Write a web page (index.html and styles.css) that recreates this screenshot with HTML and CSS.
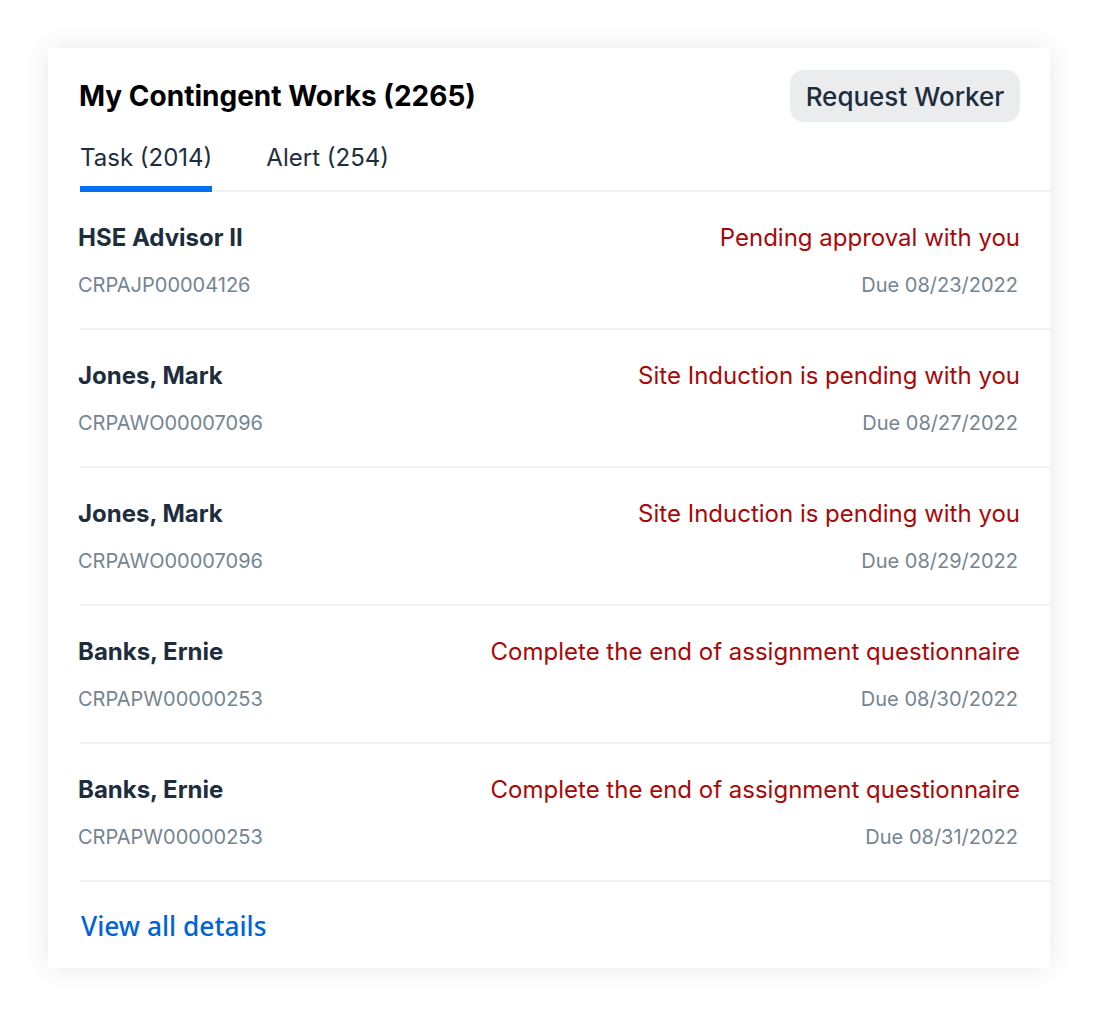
FILE: index.html
```html
<!DOCTYPE html>
<html lang="en">
<head>
<meta charset="utf-8">
<title>My Contingent Works</title>
<link rel="stylesheet" href="styles.css">
</head>
<body>
<div class="card">
  <div class="header">
    <h1 class="title">My Contingent Works (2265)</h1>
    <button class="btn">Request Worker</button>
  </div>
  <div class="tabs">
    <div class="tab active">Task (2014)</div>
    <div class="tab">Alert (254)</div>
  </div>
  <ul class="list">
    <li class="row">
      <div class="line"><span class="name">HSE Advisor II</span><span class="status">Pending approval with you</span></div>
      <div class="line"><span class="id">CRPAJP00004126</span><span class="due">Due 08/23/2022</span></div>
    </li>
    <li class="row">
      <div class="line"><span class="name">Jones, Mark</span><span class="status">Site Induction is pending with you</span></div>
      <div class="line"><span class="id">CRPAWO00007096</span><span class="due">Due 08/27/2022</span></div>
    </li>
    <li class="row">
      <div class="line"><span class="name">Jones, Mark</span><span class="status">Site Induction is pending with you</span></div>
      <div class="line"><span class="id">CRPAWO00007096</span><span class="due">Due 08/29/2022</span></div>
    </li>
    <li class="row">
      <div class="line"><span class="name">Banks, Ernie</span><span class="status">Complete the end of assignment questionnaire</span></div>
      <div class="line"><span class="id">CRPAPW00000253</span><span class="due">Due 08/30/2022</span></div>
    </li>
    <li class="row">
      <div class="line"><span class="name">Banks, Ernie</span><span class="status">Complete the end of assignment questionnaire</span></div>
      <div class="line"><span class="id">CRPAPW00000253</span><span class="due">Due 08/31/2022</span></div>
    </li>
  </ul>
  <div class="footer">
    <a class="link" href="#">View all details</a>
  </div>
</div>
</body>
</html>
```

FILE: styles.css
```css
* { box-sizing: border-box; }
html, body { margin: 0; padding: 0; background: #ffffff; }
body {
  padding: 48px;
  font-family: Inter, "Liberation Sans", sans-serif;
  color: #1d2d3e;
}
.card {
  width: 1002px;
  height: 920px;
  background: #ffffff;
  box-shadow: 0 0 24px rgba(30, 40, 60, 0.10);
  padding: 22px 0 0 32px;
}
.header {
  display: flex;
  align-items: center;
  justify-content: space-between;
  padding-right: 30px;
  height: 52px;
}
.title {
  margin: 0 0 0 -1px;
  font-size: 28px;
  font-weight: 700;
  color: #000000;
  line-height: 34px;
}
.btn {
  width: 230px;
  height: 52px;
  border: none;
  border-radius: 14px;
  background: #eaecee;
  color: #1d2d3e;
  font-family: Inter, "Liberation Sans", sans-serif;
  font-size: 26px;
  font-weight: 500;
  padding: 0;
}
.tabs {
  display: flex;
  gap: 54px;
  margin-top: 21px;
  border-bottom: 2px solid #eff1f2;
}
.tab {
  font-size: 24px;
  line-height: 30px;
  padding-bottom: 13px;
  margin-bottom: -2px;
  border-bottom: 6px solid transparent;
  color: #1d2d3e;
}
.tab.active { border-bottom-color: #0070f2; }
.list { list-style: none; margin: 0; padding: 0; }
.row {
  height: 138px;
  padding: 31px 30px 0 0;
  border-bottom: 2px solid #eff1f2;
}
.line {
  display: flex;
  justify-content: space-between;
  align-items: center;
  margin-left: -2px;
}
.line + .line { margin-top: 19px; }
.name {
  font-size: 24px;
  font-weight: 700;
  line-height: 30px;
  color: #1d2d3e;
}
.status {
  font-size: 24px;
  line-height: 30px;
  color: #aa0808;
}
.id, .due {
  font-size: 20px;
  line-height: 26px;
  color: #768491;
}
.due { margin-right: 2px; }
.footer { padding-top: 28px; }
.link {
  font-family: "Noto Sans", Inter, sans-serif;
  font-size: 26.3px;
  font-weight: 500;
  line-height: 32px;
  color: #0064d9;
  text-decoration: none;
  margin-left: 1px;
}
```
